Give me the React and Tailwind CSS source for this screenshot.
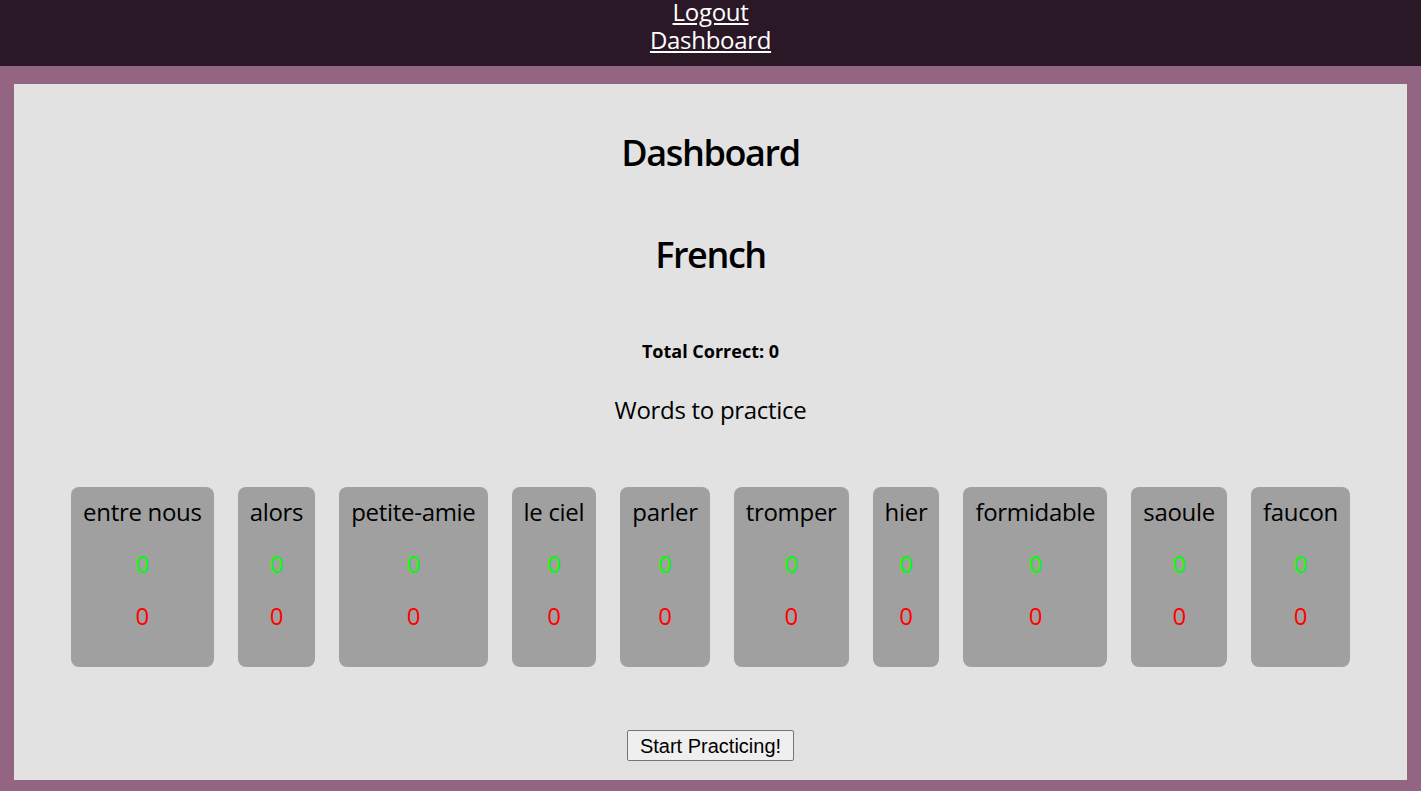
import React from "react";

const words = [
  "entre nous",
  "alors",
  "petite-amie",
  "le ciel",
  "parler",
  "tromper",
  "hier",
  "formidable",
  "saoule",
  "faucon",
];

const App = () => {
  return (
    <div className="min-h-[791px] bg-[#946583] font-['Open_Sans',sans-serif] text-black">
      {/* barre du haut */}
      <nav className="h-[66px] bg-[#2b1826] text-[24px] leading-[28px] text-white tracking-[-0.3px]">
        <div className="flex flex-col items-center -translate-y-[2px]">
          <a href="#" className="underline">Logout</a>
          <a href="#" className="underline">Dashboard</a>
        </div>
      </nav>

      <div className="px-[14px] pt-[18px] pb-[11px]">
        <main className="bg-[#e2e2e2] h-[696px] flex flex-col items-center pt-[51px]">
          <h1 className="text-[36px] leading-[36px] font-semibold tracking-[-1.4px]">Dashboard</h1>
          <h2 className="text-[36px] leading-[36px] font-semibold tracking-[-1.4px] mt-[66px]">French</h2>
          <h6 className="text-[18px] leading-[20px] font-bold mt-[68px]">Total Correct: 0</h6>
          <p className="text-[24px] leading-[28px] tracking-[-0.3px] mt-[35px]">Words to practice</p>

          <div className="flex justify-center gap-6 mt-[63px]">
            {words.map((w) => (
              <div
                key={w}
                className="h-[180px] bg-[#a0a0a0] rounded-lg px-3 pt-[11px] flex flex-col items-center gap-6 text-[24px] leading-[28px] tracking-[-0.3px]"
              >
                <span>{w}</span>
                <span className="text-[#00ff00]">0</span>
                <span className="text-[#ff0000]">0</span>
              </div>
            ))}
          </div>

          <button className="mt-[63px] h-[31px] px-3 bg-[#efefef] border border-[#767676] rounded-[2px] font-['Liberation_Sans',Arial,sans-serif] text-[20px] leading-[24px]">
            Start Practicing!
          </button>
        </main>
      </div>
    </div>
  );
};

export default App;
